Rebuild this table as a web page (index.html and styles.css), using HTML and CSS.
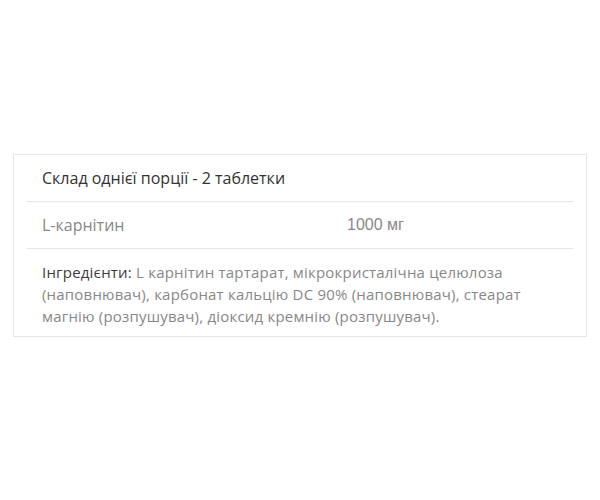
FILE: index.html
```html
<!DOCTYPE html>
<html lang="uk">
<head>
<meta charset="utf-8">
<link rel="stylesheet" href="styles.css">
</head>
<body>
<div class="box">
  <div class="row head">Склад однієї порції - 2 таблетки</div>
  <div class="row item">
    <span class="name">L-карнітин</span>
    <span class="value">1000 мг</span>
  </div>
  <p class="ingr"><span class="label">Інгредієнти:</span> L карнітин тартарат, мікрокристалічна целюлоза (наповнювач), карбонат кальцію DC 90% (наповнювач), стеарат магнію (розпушувач), діоксид кремнію (розпушувач).</p>
</div>
</body>
</html>
```
FILE: styles.css
```css
html, body {
  margin: 0;
  padding: 0;
  background: #fff;
}
body {
  padding: 154px 13px 0;
  font-family: "Open Sans", "Liberation Sans", sans-serif;
}
.box {
  border: 1px solid #e6e6e6;
  padding: 0 13px;
  height: 181px;
  box-sizing: content-box;
}
.row {
  height: 46px;
  border-bottom: 1px solid #e6e6e6;
  display: flex;
  align-items: center;
  padding-left: 15px;
}
.head {
  font-size: 16px;
  color: #333;
}
.item {
  font-size: 16px;
  color: #888;
}
.name {
  width: 305px;
}
.value {
  font-family: "Liberation Sans", Arial, sans-serif;
  font-size: 16px;
  color: #888;
}
.ingr {
  margin: 0;
  padding: 12px 15px 0;
  font-size: 15px;
  letter-spacing: 0.2px;
  line-height: 22px;
  color: #888;
}
.label {
  color: #3c3c3c;
}
```
